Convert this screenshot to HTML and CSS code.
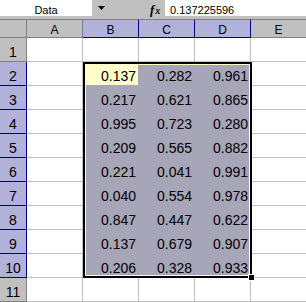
FILE: index.html
```html
<!DOCTYPE html>
<html>
<head>
<meta charset="utf-8">
<link rel="stylesheet" href="styles.css">
</head>
<body>
<div class="formula-bar">
  <div class="namebox">Data</div>
  <div class="nb-drop"><svg width="7" height="4" viewBox="0 0 7 4"><path d="M0 0H7L3.5 4Z" fill="#000"/></svg></div>
  <div class="fx"><span class="fx-f">f</span><span class="fx-x">x</span></div>
  <div class="formula">0.137225596</div>
</div>
<div class="sheet">
  <div class="hd corner"></div>
  <div class="hd col">A</div>
  <div class="hd col hsel">B</div>
  <div class="hd col hsel">C</div>
  <div class="hd col hsel">D</div>
  <div class="hd col">E</div>

  <div class="hd row">1</div>
  <div class="c"></div><div class="c"></div><div class="c"></div><div class="c"></div><div class="c"></div>

  <div class="hd row hsel">2</div>
  <div class="c"></div><div class="c active">0.137</div><div class="c sel">0.282</div><div class="c sel">0.961</div><div class="c"></div>

  <div class="hd row hsel">3</div>
  <div class="c"></div><div class="c sel">0.217</div><div class="c sel">0.621</div><div class="c sel">0.865</div><div class="c"></div>

  <div class="hd row hsel">4</div>
  <div class="c"></div><div class="c sel">0.995</div><div class="c sel">0.723</div><div class="c sel">0.280</div><div class="c"></div>

  <div class="hd row hsel">5</div>
  <div class="c"></div><div class="c sel">0.209</div><div class="c sel">0.565</div><div class="c sel">0.882</div><div class="c"></div>

  <div class="hd row hsel">6</div>
  <div class="c"></div><div class="c sel">0.221</div><div class="c sel">0.041</div><div class="c sel">0.991</div><div class="c"></div>

  <div class="hd row hsel">7</div>
  <div class="c"></div><div class="c sel">0.040</div><div class="c sel">0.554</div><div class="c sel">0.978</div><div class="c"></div>

  <div class="hd row hsel">8</div>
  <div class="c"></div><div class="c sel">0.847</div><div class="c sel">0.447</div><div class="c sel">0.622</div><div class="c"></div>

  <div class="hd row hsel">9</div>
  <div class="c"></div><div class="c sel">0.137</div><div class="c sel">0.679</div><div class="c sel">0.907</div><div class="c"></div>

  <div class="hd row hsel">10</div>
  <div class="c"></div><div class="c sel">0.206</div><div class="c sel">0.328</div><div class="c sel">0.933</div><div class="c"></div>

  <div class="hd row">11</div>
  <div class="c"></div><div class="c"></div><div class="c"></div><div class="c"></div><div class="c"></div>

  <div class="selection"><div class="handle"></div></div>
</div>
</body>
</html>
```

FILE: styles.css
```css
html, body {
  margin: 0;
  padding: 0;
  width: 306px;
  height: 302px;
  overflow: hidden;
  background: #ffffff;
  font-family: "Liberation Sans", Arial, sans-serif;
}

.formula-bar {
  display: flex;
  height: 19px;
  background: #c0c0c0;
}

.namebox {
  width: 92px;
  height: 14px;
  padding-top: 2px;
  line-height: 16px;
  background: #ffffff;
  font-size: 11px;
  text-align: center;
  color: #000;
}

.nb-drop {
  width: 18px;
  height: 16px;
  display: flex;
  align-items: center;
  justify-content: center;
}

.fx {
  margin-left: 40px;
  width: 15px;
  height: 16px;
  line-height: 16px;
  padding-top: 1px;
  box-sizing: border-box;
  font-family: "Liberation Serif", serif;
  font-style: italic;
  font-weight: bold;
  color: #000;
}

.fx-f {
  font-size: 13px;
}

.fx-x {
  font-size: 10px;
  margin-left: 1px;
}

.formula {
  flex: 1;
  height: 14px;
  padding-top: 2px;
  padding-left: 5px;
  line-height: 16px;
  background: #ffffff;
  font-size: 11px;
  color: #000;
}

.sheet {
  position: relative;
  display: grid;
  grid-template-columns: 27px repeat(5, 56px);
  grid-template-rows: 19px repeat(11, 24px);
}

.sheet > div {
  box-sizing: border-box;
}

.hd {
  background: #c0c0c0;
  border-right: 1px solid #808080;
  border-bottom: 1px solid #808080;
  color: #000;
  display: flex;
  align-items: flex-end;
  justify-content: center;
}

.corner, .col {
  border-top: 1px solid #808080;
}

.col {
  font-size: 12px;
  line-height: 14px;
}

.row {
  font-size: 14px;
  line-height: 17px;
}

.hd.hsel {
  background: #b1b1d9;
  border-right-color: #000080;
  border-bottom-color: #000080;
}

.c {
  border-right: 1px solid #c0c0c0;
  border-bottom: 1px solid #c0c0c0;
  font-size: 14px;
  line-height: 17px;
  color: #000;
  display: flex;
  align-items: flex-end;
  justify-content: flex-end;
  padding-right: 2px;
}

.c.sel {
  background: #a7a6b9;
  border-color: #a7a6b9;
}

.c.active {
  background: #ffffcc;
  border-right-color: #a7a6b9;
  border-bottom-color: #a7a6b9;
}

.selection {
  position: absolute;
  left: 83px;
  top: 43px;
  width: 169px;
  height: 216px;
  box-sizing: border-box;
  border: 2px solid #000000;
  box-shadow: inset 0 0 0 1px #ffffcc;
}

.handle {
  position: absolute;
  right: -5px;
  bottom: -5px;
  width: 5px;
  height: 5px;
  background: #000000;
  border: 1px solid #ffffff;
}
```
